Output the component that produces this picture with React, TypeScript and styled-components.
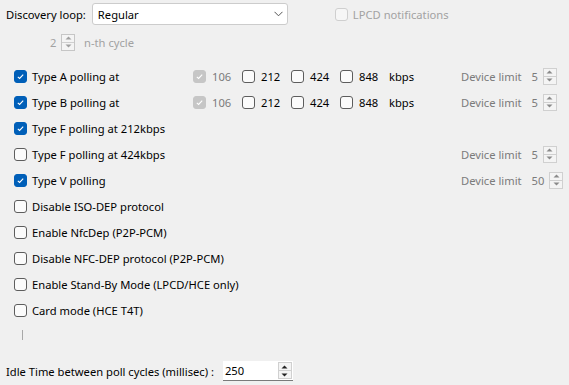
import styled, { createGlobalStyle } from "styled-components";

const GlobalStyle = createGlobalStyle`
  html, body {
    margin: 0;
    padding: 0;
    background: #f0f0f0;
  }
  body {
    font-family: "Segoe UI", "Noto Sans", "Open Sans", sans-serif;
    font-size: 11.2px;
    color: #000;
  }
`;

type Speed = { label: string; checked?: boolean; disabled?: boolean };

type Option = {
  label: string;
  checked: boolean;
  speeds?: Speed[];
  limit?: string;
};

const speedSet: Speed[] = [
  { label: "106", checked: true, disabled: true },
  { label: "212" },
  { label: "424" },
  { label: "848" },
];

const options: Option[] = [
  { label: "Type A polling at", checked: true, speeds: speedSet, limit: "5" },
  { label: "Type B polling at", checked: true, speeds: speedSet, limit: "5" },
  { label: "Type F polling at 212kbps", checked: true },
  { label: "Type F polling at 424kbps", checked: false, limit: "5" },
  { label: "Type V polling", checked: true, limit: "50" },
  { label: "Disable ISO-DEP protocol", checked: false },
  { label: "Enable NfcDep (P2P-PCM)", checked: false },
  { label: "Disable NFC-DEP protocol (P2P-PCM)", checked: false },
  { label: "Enable Stand-By Mode (LPCD/HCE only)", checked: false },
  { label: "Card mode (HCE T4T)", checked: false },
];

const Box = styled.span<{ $checked?: boolean; $disabled?: boolean }>`
  display: inline-flex;
  align-items: center;
  justify-content: center;
  box-sizing: border-box;
  width: 13px;
  height: 13px;
  flex: none;
  border-radius: 3px;
  border: 1px solid
    ${(p) =>
      p.$checked
        ? p.$disabled
          ? "#c6c6c6"
          : "#005fb8"
        : p.$disabled
        ? "#cfcfcf"
        : "#5d5d5d"};
  background: ${(p) =>
    p.$checked ? (p.$disabled ? "#c6c6c6" : "#005fb8") : p.$disabled ? "#f6f6f6" : "#fbfbfb"};
`;

function CheckBox({ checked, disabled }: { checked?: boolean; disabled?: boolean }) {
  return (
    <Box $checked={checked} $disabled={disabled}>
      {checked && (
        <svg width="9" height="9" viewBox="0 0 9 9">
          <path d="M1.8 4.8 L3.6 6.4 L7.2 2.6" fill="none" stroke="#fff" strokeWidth="1.1" />
        </svg>
      )}
    </Box>
  );
}

const Page = styled.div`
  display: flex;
  flex-direction: column;
  width: 569px;
  height: 385px;
  box-sizing: border-box;
  padding: 1px 0 0 6px;
`;

const TopRow = styled.div`
  display: flex;
  align-items: center;
  height: 26px;
`;

const Label = styled.span<{ $tone?: "dim" | "muted" }>`
  white-space: nowrap;
  color: ${(p) => (p.$tone === "dim" ? "#a2a2a2" : p.$tone === "muted" ? "#7b7b7b" : "#000")};
`;

const Select = styled.div`
  display: flex;
  align-items: center;
  justify-content: space-between;
  box-sizing: border-box;
  margin-left: 6px;
  width: 196px;
  height: 22px;
  padding: 0 4px 0 5px;
  background: #fff;
  border: 1px solid #cccccc;
  border-radius: 3px;
`;

const CheckLabel = styled.label<{ $gap?: number }>`
  display: flex;
  align-items: center;
  gap: ${(p) => p.$gap ?? 5}px;
`;

const LpcdWrap = styled.div`
  margin-left: 47px;
`;

const CycleRow = styled.div`
  display: flex;
  align-items: center;
  height: 26px;
  margin-top: 2px;
  padding-left: 44px;
`;

const CycleValue = styled.span`
  color: #a2a2a2;
  width: 11px;
  flex: none;
`;

const LimitValue = styled.span`
  color: #7b7b7b;
  margin: 0 5px 0 10px;
`;

const SpinBox = styled.span<{ $light?: boolean }>`
  display: inline-flex;
  flex-direction: column;
  box-sizing: border-box;
  width: 14px;
  height: 17px;
  flex: none;
  border: 1px solid ${(p) => (p.$light ? "#c6c6c6" : "#d0d0d0")};
  background: #f4f4f4;
`;

const SpinHalf = styled.span<{ $top?: boolean }>`
  flex: 1;
  display: flex;
  align-items: center;
  justify-content: center;
  border-top: ${(p) => (p.$top ? "none" : "1px solid #cfcfcf")};
`;

function Spinner({ color = "#8a8a8a", light }: { color?: string; light?: boolean }) {
  return (
    <SpinBox $light={light}>
      <SpinHalf $top>
        <svg width="7" height="4" viewBox="0 0 7 4">
          <path d="M0.5 3.5 L3.5 0.5 L6.5 3.5 Z" fill={color} />
        </svg>
      </SpinHalf>
      <SpinHalf>
        <svg width="7" height="4" viewBox="0 0 7 4">
          <path d="M0.5 0.5 L3.5 3.5 L6.5 0.5 Z" fill={color} />
        </svg>
      </SpinHalf>
    </SpinBox>
  );
}

const CycleText = styled(Label)`
  margin-left: 9px;
`;

const OptionList = styled.div`
  display: flex;
  flex-direction: column;
  margin-top: 8px;
  padding-left: 8px;
`;

const OptionRow = styled.div`
  display: grid;
  grid-template-columns: 179px 268px auto;
  align-items: center;
  height: 26px;
`;

const Speeds = styled.div`
  display: flex;
  align-items: center;
`;

const SpeedItem = styled.div`
  width: 49px;
`;

const DeviceLimit = styled.div`
  display: flex;
  align-items: center;
`;

const Caret = styled.div`
  width: 1px;
  height: 10px;
  margin: 7px 0 0 8px;
  background: #a8a8a8;
`;

const IdleRow = styled.div`
  display: flex;
  align-items: center;
  margin-top: 21px;
  height: 20px;
`;

const NumberInput = styled.div`
  display: flex;
  align-items: center;
  justify-content: space-between;
  box-sizing: border-box;
  margin-left: 9px;
  width: 70px;
  height: 20px;
  padding: 0 1px 0 2px;
  background: #fff;
  border-bottom: 1px solid #7a7a7a;
`;

export default function App() {
  return (
    <>
      <GlobalStyle />
      <Page>
        <TopRow>
          <Label>Discovery loop:</Label>
          <Select>
            <span>Regular</span>
            <svg width="9" height="6" viewBox="0 0 9 6">
              <path d="M0.5 0.8 L4.5 4.8 L8.5 0.8" fill="none" stroke="#555" strokeWidth="1" />
            </svg>
          </Select>
          <LpcdWrap>
            <CheckLabel>
              <CheckBox disabled />
              <Label $tone="dim">LPCD notifications</Label>
            </CheckLabel>
          </LpcdWrap>
        </TopRow>

        <CycleRow>
          <CycleValue>2</CycleValue>
          <Spinner color="#a0a0a0" light />
          <CycleText $tone="dim">n-th cycle</CycleText>
        </CycleRow>

        <OptionList>
          {options.map((o) => (
            <OptionRow key={o.label}>
              <CheckLabel>
                <CheckBox checked={o.checked} />
                <Label>{o.label}</Label>
              </CheckLabel>
              <Speeds>
                {o.speeds?.map((s) => (
                  <SpeedItem key={s.label}>
                    <CheckLabel $gap={6}>
                      <CheckBox checked={s.checked} disabled={s.disabled} />
                      <Label $tone={s.disabled ? "muted" : undefined}>{s.label}</Label>
                    </CheckLabel>
                  </SpeedItem>
                ))}
                {o.speeds && <Label>kbps</Label>}
              </Speeds>
              {o.limit ? (
                <DeviceLimit>
                  <Label $tone="muted">Device limit</Label>
                  <LimitValue>{o.limit}</LimitValue>
                  <Spinner />
                </DeviceLimit>
              ) : (
                <span />
              )}
            </OptionRow>
          ))}
          <Caret />
        </OptionList>

        <IdleRow>
          <Label>Idle Time between poll cycles (millisec) :</Label>
          <NumberInput>
            <span>250</span>
            <Spinner color="#222" />
          </NumberInput>
        </IdleRow>
      </Page>
    </>
  );
}
